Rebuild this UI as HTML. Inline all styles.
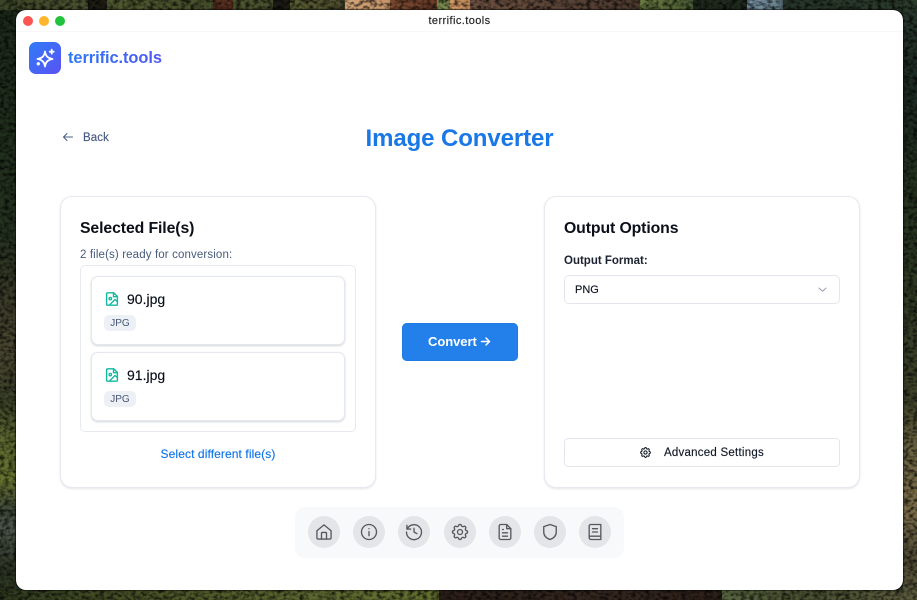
<!DOCTYPE html>
<html><head><meta charset="utf-8"><style>
html,body{margin:0;padding:0}
body{width:917px;height:600px;overflow:hidden;position:relative;background:#22301f;font-family:"Liberation Sans",sans-serif;color:#0a0f1a}
.a{position:absolute;white-space:nowrap}
.bg{position:absolute}
.m{-webkit-text-stroke:.15px currentColor}
.card{position:absolute;background:#fff;border:1.5px solid #e6e9ef;border-radius:12px;box-shadow:0 1px 2px rgba(30,41,59,.12);box-sizing:border-box}
.file{position:absolute;left:91px;width:254px;background:#fff;border:1px solid #e5e8ee;border-radius:7px;box-shadow:0 1px 2px rgba(30,41,59,.2);box-sizing:border-box}
.tag{position:absolute;left:104px;width:32px;height:16px;background:#edf0f5;border-radius:5px;color:#475774;font-size:10px;line-height:17px;text-align:center}
.nb{position:absolute;top:516px;width:32px;height:32px;border-radius:50%;background:#e4e5e8}
.nb svg{position:absolute;left:6px;top:6px;width:20px;height:20px;fill:none;stroke:#55595f;stroke-width:1.6;stroke-linecap:round;stroke-linejoin:round}
</style></head><body>
<div class="bg" style="left:0;top:0;width:16px;height:600px;background:linear-gradient(180deg,#1c2a1a 0,#202e1c 130px,#263220 240px,#3a3a28 300px,#4a4630 350px,#3a4028 400px,#5c6a30 440px,#66722f 480px,#3f4a3a 510px,#4a544a 530px,#2a3322 570px,#333d22 600px)"></div>
<div class="bg" style="left:903px;top:0;width:14px;height:600px;background:linear-gradient(180deg,#2a3a2e 0,#1c2a22 90px,#25331f 200px,#303a24 300px,#3e4228 400px,#6a6240 450px,#7a6c48 510px,#4f4a34 560px,#5a5a3c 600px)"></div>
<div class="bg" style="left:0;top:0;width:917px;height:10px;background:linear-gradient(90deg,#3a4426 0,#4a5230 88px,#1f1c14 88px,#1f1c14 107px,#505a30 107px,#46502c 213px,#5a3020 213px,#5a3020 233px,#4c5630 233px,#46502c 273px,#1c1a14 273px,#1c1a14 290px,#5a6034 290px,#4a4a2c 345px,#d0a478 345px,#c8956a 390px,#7c4a30 390px,#6a3c28 437px,#7c8c50 437px,#7c8c50 450px,#d49a68 450px,#c08858 470px,#6c5040 470px,#4c3a2e 640px,#6a7a40 640px,#4a5c34 693px,#1e281c 693px,#202a1e 747px,#7a94a8 747px,#647c84 783px,#26362a 783px,#2c3c2c 917px)"></div>
<div class="bg" style="left:0;top:590px;width:917px;height:10px;background:linear-gradient(90deg,#2f3a1f 0,#4a5428 150px,#5a6630 300px,#63702f 439px,#2c1f18 439px,#362820 600px,#2c1f18 722px,#586640 722px,#485030 800px,#5a5a3c 917px)"></div>
<svg class="a" style="left:0;top:0" width="917" height="600"><filter id="n" x="0" y="0" width="100%" height="100%"><feTurbulence type="fractalNoise" baseFrequency=".22 .3" numOctaves="2" seed="4"/><feColorMatrix values="0 0 0 0 0 0 0 0 0 0 0 0 0 0 0 0 0 0 2.600 -1"/></filter><rect width="917" height="600" filter="url(#n)" opacity=".7"/></svg>

<div class="bg" style="left:16px;top:10px;width:887px;height:580px;background:#fff;border-radius:10px;box-shadow:0 0 1px 1px rgba(0,0,0,.55)"></div>
<div class="bg" style="left:16px;top:31px;width:887px;height:1px;background:#f8f8f9"></div>
<div class="bg" style="left:23px;top:16px;width:10px;height:10px;border-radius:50%;background:#fd5551"></div>
<div class="bg" style="left:39px;top:16px;width:10px;height:10px;border-radius:50%;background:#fdb62c"></div>
<div class="bg" style="left:55px;top:16px;width:10px;height:10px;border-radius:50%;background:#22c33c"></div>
<div class="a m" style="left:300px;width:319px;top:15px;text-align:center;font-size:11px;line-height:13px;color:#222;letter-spacing:.42px">terrific.tools</div>

<div class="bg" style="left:29px;top:42px;width:32px;height:32px;border-radius:7px;background:linear-gradient(135deg,#2f7cf6,#5a52f4)"></div>
<svg class="a" style="left:29px;top:42px" width="32" height="32" viewBox="0 0 32 32" fill="none" stroke="#fff" stroke-width="1.8" stroke-linecap="round" stroke-linejoin="round"><path d="M16 9.500C16.700 14 18.500 16 23.500 17C18.500 18 16.700 20 16 24.500C15.300 20 13.500 18 8.500 17C13.500 16 15.300 14 16 9.500Z"/><path d="M22.700 7.700v4M20.700 9.700h4"/><circle cx="9.300" cy="21.800" r=".8" fill="#fff"/></svg>
<div class="a" style="left:68px;top:48px;font-size:16.400px;line-height:20px;font-weight:700;letter-spacing:-.06px;background:linear-gradient(90deg,#2c78f5,#4f55f5);-webkit-background-clip:text;background-clip:text;color:transparent">terrific.tools</div>

<svg class="a" style="left:61px;top:130px" width="14" height="14" viewBox="0 0 14 14" fill="none" stroke="#4a5f86" stroke-width="1.1" stroke-linecap="round" stroke-linejoin="round"><path d="M11.500 7H2.500M6 3.500L2.500 7 6 10.500"/></svg>
<div class="a m" style="left:83px;top:131px;font-size:11.500px;line-height:14px;color:#475a80;letter-spacing:.1px">Back</div>
<div class="a" style="left:300px;width:319px;top:124px;text-align:center;font-size:24px;line-height:30px;font-weight:700;color:#1a77e6;letter-spacing:-.1px">Image Converter</div>

<div class="card" style="left:60px;top:196px;width:316px;height:292px"></div>
<div class="a" style="left:80px;top:219px;font-size:15.800px;line-height:19px;font-weight:700;color:#0b0f19;letter-spacing:-.1px">Selected File(s)</div>
<div class="a" style="left:80px;top:248px;font-size:11.500px;line-height:14px;color:#475a7c;letter-spacing:.13px">2 file(s) ready for conversion:</div>
<div class="bg" style="left:80px;top:265px;width:276px;height:167px;box-sizing:border-box;border:1px solid #e6e9ef;border-radius:5px"></div>

<div class="file" style="top:276px;height:69px"></div>
<svg class="a" style="left:104px;top:291px" width="16" height="16" viewBox="0 0 16 16" fill="none" stroke="#14b8a0" stroke-width="1.400" stroke-linecap="round" stroke-linejoin="round"><path d="M9.700 1.800H3.600a1 1 0 0 0-1 1v10.400a1 1 0 0 0 1 1h8.800a1 1 0 0 0 1-1V5.500z"/><path d="M9.500 2v3.700h3.700"/><circle cx="6.300" cy="7.600" r="1.200"/><path d="M13 10.200l-2-1.700-5 5"/></svg>
<div class="a m" style="left:127px;top:291px;font-size:14px;line-height:17px;color:#0a0f1a">90.jpg</div>
<div class="tag" style="top:315px">JPG</div>

<div class="file" style="top:352px;height:69px"></div>
<svg class="a" style="left:104px;top:367px" width="16" height="16" viewBox="0 0 16 16" fill="none" stroke="#14b8a0" stroke-width="1.400" stroke-linecap="round" stroke-linejoin="round"><path d="M9.700 1.800H3.600a1 1 0 0 0-1 1v10.400a1 1 0 0 0 1 1h8.800a1 1 0 0 0 1-1V5.500z"/><path d="M9.500 2v3.700h3.700"/><circle cx="6.300" cy="7.600" r="1.200"/><path d="M13 10.200l-2-1.700-5 5"/></svg>
<div class="a m" style="left:127px;top:367px;font-size:14px;line-height:17px;color:#0a0f1a">91.jpg</div>
<div class="tag" style="top:391px">JPG</div>

<div class="a m" style="left:60px;width:316px;top:447px;text-align:center;font-size:12px;line-height:14px;color:#0f75e8;letter-spacing:.1px">Select different file(s)</div>

<div class="bg" style="left:402px;top:323px;width:116px;height:38px;background:#2380ea;border-radius:5px;box-shadow:inset 0 0 0 .5px #1c74dc"></div>
<div class="a" style="left:428px;top:334px;font-size:13px;line-height:16px;font-weight:700;color:#fff;letter-spacing:-.05px">Convert</div>
<svg class="a" style="left:480px;top:336px" width="11" height="11" viewBox="0 0 11 11" fill="none" stroke="#fff" stroke-width="1.500" stroke-linecap="round" stroke-linejoin="round"><path d="M1.500 5.500h8M6 2l3.500 3.500L6 9"/></svg>

<div class="card" style="left:544px;top:196px;width:316px;height:292px"></div>
<div class="a" style="left:564px;top:219px;font-size:15.800px;line-height:19px;font-weight:700;color:#0b0f19;letter-spacing:-.1px">Output Options</div>
<div class="a" style="left:564px;top:254px;font-size:11.500px;line-height:14px;font-weight:700;color:#1b2230;letter-spacing:0">Output Format:</div>
<div class="bg" style="left:564px;top:275px;width:276px;height:29px;box-sizing:border-box;background:#fff;border:1px solid #e4e6ef;border-radius:5px"></div>
<div class="a m" style="left:575px;top:283px;font-size:11px;line-height:14px;color:#0f1420">PNG</div>
<svg class="a" style="left:817px;top:284px" width="11" height="11" viewBox="0 0 11 11" fill="none" stroke="#9aa0b0" stroke-width="1" stroke-linecap="round" stroke-linejoin="round"><path d="M2 4l3.500 3.300L9 4"/></svg>

<div class="bg" style="left:564px;top:438px;width:276px;height:29px;box-sizing:border-box;background:#fff;border:1px solid #e4e6ef;border-radius:4px"></div>
<svg class="a" style="left:639px;top:446px" width="13" height="13" viewBox="0 0 24 24" fill="none" stroke="#111827" stroke-width="2" stroke-linecap="round" stroke-linejoin="round"><path d="M10.300 4.300c.4-1.800 3-1.800 3.400 0a1.700 1.700 0 0 0 2.600 1c1.500-.9 3.300.8 2.400 2.400a1.700 1.700 0 0 0 1 2.600c1.800.4 1.800 3 0 3.400a1.700 1.700 0 0 0-1 2.600c.9 1.500-.8 3.300-2.400 2.400a1.700 1.700 0 0 0-2.600 1c-.4 1.800-3 1.800-3.400 0a1.700 1.700 0 0 0-2.600-1c-1.500.9-3.300-.8-2.400-2.400a1.700 1.700 0 0 0-1-2.600c-1.800-.4-1.800-3 0-3.400a1.700 1.700 0 0 0 1-2.600c-.9-1.500.8-3.300 2.400-2.400a1.700 1.700 0 0 0 2.600-1z"/><circle cx="12" cy="12" r="3"/></svg>
<div class="a m" style="left:664px;top:446px;font-size:11.500px;line-height:14px;color:#111827;letter-spacing:.24px">Advanced Settings</div>

<div class="bg" style="left:295px;top:507px;width:329px;height:51px;background:#f8f9fa;border-radius:10px"></div>
<div class="nb" style="left:308px"><svg viewBox="0 0 24 24"><path d="M3.500 10.500L12 3.500l8.500 7V19a1.500 1.500 0 0 1-1.500 1.500H5A1.500 1.500 0 0 1 3.500 19z"/><path d="M9 20.500V13.500a1 1 0 0 1 1-1h4a1 1 0 0 1 1 1v7"/></svg></div>
<div class="nb" style="left:353px"><svg viewBox="0 0 24 24"><circle cx="12" cy="12" r="9"/><path d="M12 11.500v5M12 8v.1"/></svg></div>
<div class="nb" style="left:398px"><svg viewBox="0 0 24 24"><path d="M3.500 4v4.500H8"/><path d="M3.800 8.500A9 9 0 1 1 3 12"/><path d="M12 7.500V12l3.500 2"/></svg></div>
<div class="nb" style="left:444px"><svg viewBox="0 0 24 24"><path d="M10.300 4.300c.4-1.800 3-1.800 3.400 0a1.700 1.700 0 0 0 2.600 1c1.500-.9 3.300.8 2.400 2.400a1.700 1.700 0 0 0 1 2.600c1.800.4 1.800 3 0 3.400a1.700 1.700 0 0 0-1 2.600c.9 1.500-.8 3.300-2.400 2.400a1.700 1.700 0 0 0-2.600 1c-.4 1.800-3 1.800-3.400 0a1.700 1.700 0 0 0-2.600-1c-1.500.9-3.300-.8-2.400-2.400a1.700 1.700 0 0 0-1-2.600c-1.800-.4-1.800-3 0-3.400a1.700 1.700 0 0 0 1-2.600c-.9-1.500.8-3.300 2.400-2.400a1.700 1.700 0 0 0 2.600-1z"/><circle cx="12" cy="12" r="3"/></svg></div>
<div class="nb" style="left:489px"><svg viewBox="0 0 24 24"><path d="M14 3H7a2 2 0 0 0-2 2v14a2 2 0 0 0 2 2h10a2 2 0 0 0 2-2V8z"/><path d="M14 3v5h5M9 9h1M9 13h6M9 17h6"/></svg></div>
<div class="nb" style="left:534px"><svg viewBox="0 0 24 24"><path d="M12 3l7.500 2.500V12c0 4.500-3.200 7.500-7.500 9-4.300-1.500-7.500-4.500-7.500-9V5.500z"/></svg></div>
<div class="nb" style="left:579px"><svg viewBox="0 0 24 24"><path d="M5 18.500V5a2 2 0 0 1 2-2h12v18H7a2.500 2.500 0 0 1-2-2.500z"/><path d="M5 17h14M9 8h6M9 12h6"/></svg></div>
</body></html>
